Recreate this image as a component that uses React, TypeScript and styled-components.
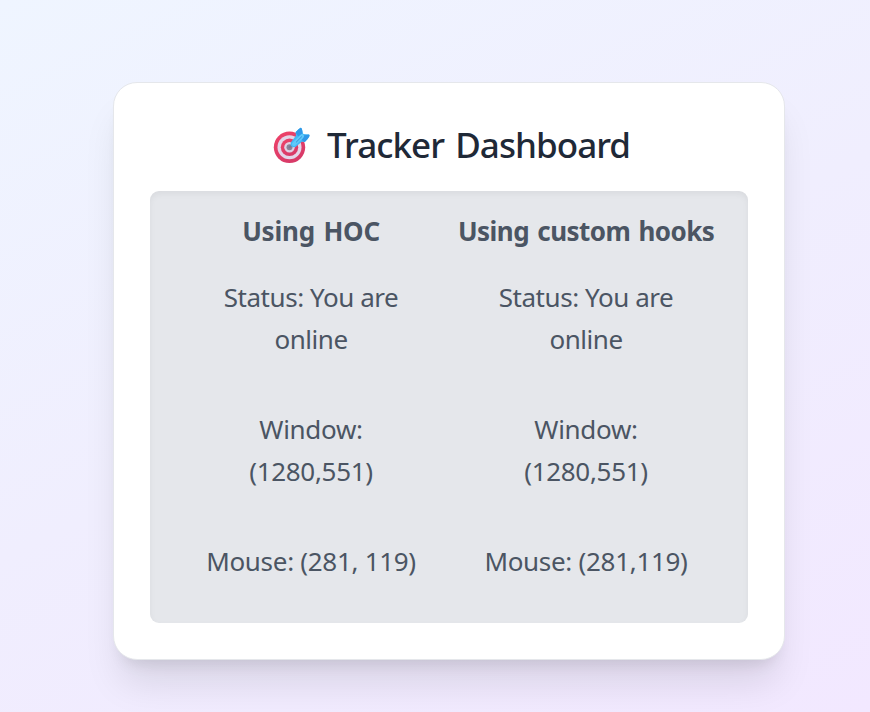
import React from 'react';
import styled, { createGlobalStyle } from 'styled-components';

const GlobalStyle = createGlobalStyle`
  *, *::before, *::after { box-sizing: border-box; }
  body { margin: 0; }
`;

const Page = styled.main`
  min-height: 712px;
  padding: 82px 85px 52px 113px;
  overflow: hidden;
  background: linear-gradient(155deg, #eff5ff, #f0eefe 50%, #f2e8ff);
  font-family: 'Segoe UI', 'Noto Sans', sans-serif;
`;

const Card = styled.section`
  width: 672px;
  height: 578px;
  padding: 36px;
  border: 1px solid #e5e7eb;
  border-radius: 24px;
  background: #fff;
  box-shadow: 0 30px 37.5px -7.5px rgba(0, 0, 0, 0.1), 0 12px 15px -9px rgba(0, 0, 0, 0.1);
`;

const Header = styled.header`
  display: flex;
  align-items: center;
  height: 54px;
  margin-bottom: 18px;
  padding-left: 123px;
`;

const Title = styled.h1`
  margin: 0 0 2px 16px;
  color: #1f2937;
  font-size: 35px;
  line-height: 52px;
  font-weight: 500;
  letter-spacing: -0.95px;
  word-spacing: 3px;
  white-space: nowrap;
`;

const Panel = styled.div`
  display: grid;
  grid-template-columns: 256px 256px;
  column-gap: 19px;
  height: 432px;
  padding: 19px 34px 41px 33px;
  border-radius: 9px;
  background: #e5e7eb;
  box-shadow: inset 0 3px 6px rgba(0, 0, 0, 0.05);
`;

const Column = styled.div`
  text-align: center;
  color: #4b5563;
  font-size: 26px;
  line-height: 42px;
  white-space: nowrap;
`;

const Heading = styled.h2<{ $tracking: number }>`
  margin: 0 0 24px;
  font-size: inherit;
  font-weight: 700;
  letter-spacing: ${({ $tracking }) => $tracking}px;
  word-spacing: 2px;
`;

const Reading = styled.p<{ $tracking?: number }>`
  margin: 0 0 48px;
  letter-spacing: ${({ $tracking = -0.3 }) => $tracking}px;
`;

const TargetIcon = () => (
  <svg width="38" height="38" viewBox="0 0 38 38" aria-hidden="true">
    <defs>
      <linearGradient id="ring" x1="0" y1="0" x2="0.5" y2="1">
        <stop offset="0" stopColor="#ef4269" />
        <stop offset="1" stopColor="#d83a68" />
      </linearGradient>
    </defs>
    <circle cx="16.5" cy="20.3" r="15.7" fill="url(#ring)" />
    <circle cx="16.5" cy="20.3" r="12" fill="#e3d5e9" />
    <circle cx="16.5" cy="20.3" r="8.7" fill="url(#ring)" />
    <circle cx="16.5" cy="20.3" r="5.3" fill="#dfd0e4" />
    <circle cx="16.5" cy="20.3" r="3" fill="#8c8298" />
    <path d="M16.5 20.3 L22 15.5" stroke="#7c7794" strokeWidth="2" strokeLinecap="round" />
    <path d="M17.8 15.5 L23 8.5 L22.6 5.5 Q22.8 4.5 27.2 1 Q28.8 0 29.5 5 L30.4 7 L36 7.6 Q37.6 9 34.4 12.2 L31.8 15 L28.8 14.8 L22.5 20 Q16.5 21 17.8 15.5Z" fill="#43b7f5" />
    <path d="M22.6 5.5 Q22.8 4.5 27.2 1 Q28.8 0 29.5 5 L29 7 L25.2 9.5Z M30.5 8.6 L36 7.6 Q37.6 9 34.4 12.2 L31.8 15 L28.8 13.2Z" fill="#3099e8" />
    <path d="M21 17 L29 9.2" stroke="#5fc9fb" strokeWidth="4" strokeLinecap="round" />
    <path d="M23.4 15 L28.6 9.8" stroke="#318fd6" strokeWidth="1" strokeLinecap="round" />
  </svg>
);

const columns = [
  { title: 'Using HOC', tracking: -0.22, mouse: '(281, 119)' },
  { title: 'Using custom hooks', tracking: -0.55, mouse: '(281,119)' },
];

export default function App() {
  return (
    <>
      <GlobalStyle />
      <Page>
        <Card>
          <Header>
            <TargetIcon />
            <Title>Tracker Dashboard</Title>
          </Header>
          <Panel>
            {columns.map(({ title, tracking, mouse }) => (
              <Column key={title}>
                <Heading $tracking={tracking}>{title}</Heading>
                <Reading $tracking={-0.45}>Status: You are<br />online</Reading>
                <Reading>Window:<br />(1280,551)</Reading>
                <Reading>Mouse: {mouse}</Reading>
              </Column>
            ))}
          </Panel>
        </Card>
      </Page>
    </>
  );
}
